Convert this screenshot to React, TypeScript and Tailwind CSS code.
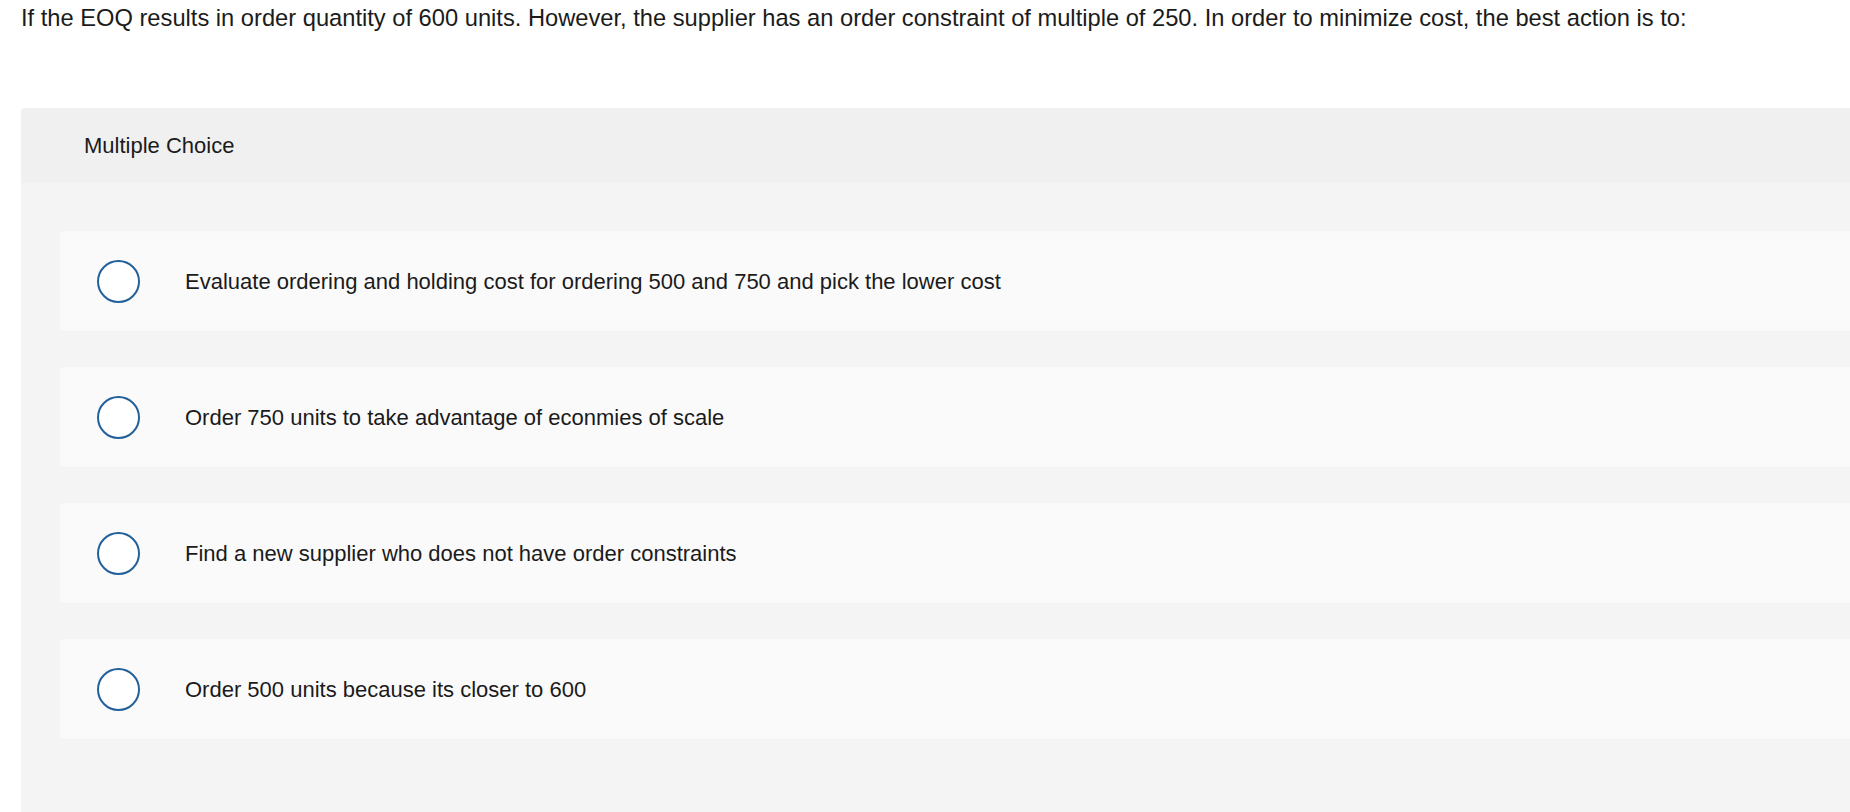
import React from "react";

const options = [
  "Evaluate ordering and holding cost for ordering 500 and 750 and pick the lower cost",
  "Order 750 units to take advantage of econmies of scale",
  "Find a new supplier who does not have order constraints",
  "Order 500 units because its closer to 600",
];

export default function App() {
  return (
    <div
      className="w-[1850px] h-[812px] overflow-hidden bg-white text-[#1b1b1b]"
      style={{ fontFamily: '"Liberation Sans", Arial, sans-serif' }}
    >
      <div className="pl-[21px] pt-[4px] h-[108px] text-[23.7px] leading-[28px] whitespace-nowrap">
        If the EOQ results in order quantity of 600 units. However, the supplier has an order constraint of multiple of 250. In order to minimize cost, the best action is to:
      </div>
      <div className="ml-[21px] w-[1860px] rounded-tl-[4px] bg-[#f4f4f4] h-[720px]">
        <div className="h-[75px] bg-[#f0f0f0] rounded-tl-[4px] flex items-center pl-[63px] text-[22px]">
          Multiple Choice
        </div>
        <div className="pt-[48px] pl-[39px] flex flex-col gap-[36px]">
          {options.map((o) => (
            <div
              key={o}
              className="h-[100px] bg-[#fafafa] rounded-[4px] flex items-center"
            >
              <div className="ml-[37px] w-[43px] h-[43px] rounded-full border-2 border-[#22609a] bg-white shrink-0" />
              <div className="ml-[45px] text-[22px]">{o}</div>
            </div>
          ))}
        </div>
      </div>
    </div>
  );
}
